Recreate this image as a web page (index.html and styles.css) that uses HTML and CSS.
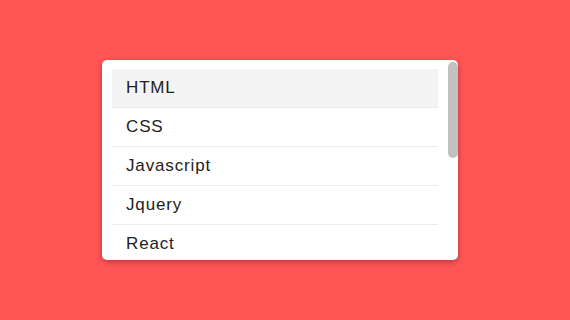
FILE: index.html
```html
<!DOCTYPE html>
<html lang="en">
<head>
    <meta charset="UTF-8">
    <meta name="viewport" content="width=device-width, initial-scale=1.0">
    <title>Scroll List</title>
    <link rel="stylesheet" href="styles.css">
</head>
<body>
    <div class="list-box">
        <ul class="list">
            <li class="active">HTML</li>
            <li>CSS</li>
            <li>Javascript</li>
            <li>Jquery</li>
            <li>React</li>
        </ul>
        <div class="scroll-thumb"></div>
    </div>
</body>
</html>
```

FILE: styles.css
```css
body {
    margin: 0;
    padding: 0 10px 0 0;
    height: 100vh;
    display: flex;
    align-items: center;
    justify-content: center;
    background-color: #ff5555;
    font-family: "Liberation Sans", Arial, sans-serif;
}

.list-box {
    position: relative;
    width: 356px;
    height: 200px;
    box-sizing: border-box;
    background-color: #fff;
    border-radius: 5px;
    box-shadow: 0 2px 6px rgba(0, 0, 0, 0.3);
    overflow: hidden;
    padding: 9px 20px 0 10px;
}

/* fake scrollbar, headless browser hides the real one */
.scroll-thumb {
    position: absolute;
    top: 2px;
    right: 0;
    width: 10px;
    height: 96px;
    background-color: #c1c1c1;
    border-radius: 5px;
}

.list {
    list-style: none;
    margin: 0;
    padding: 0;
}

.list li {
    padding: 9px 13px 9px 14px;
    font-size: 17px;
    letter-spacing: 0.85px;
    line-height: 20px;
    color: #222;
    border-bottom: 1px solid #ebebeb;
}

.list li.active {
    background-color: #f4f4f4;
}
```
